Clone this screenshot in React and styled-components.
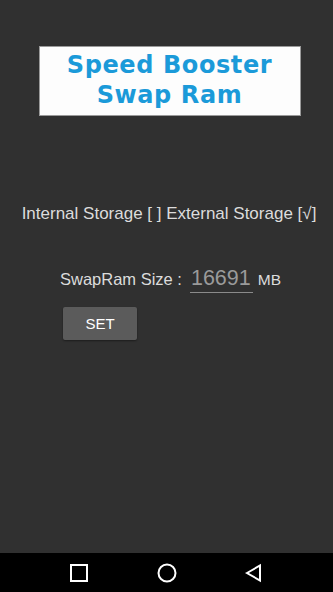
import React from 'react'
import styled, { createGlobalStyle } from 'styled-components'

const Global = createGlobalStyle`
  html, body { margin: 0; padding: 0; background: #303030; }
  body { font-family: "Liberation Sans", Arial, sans-serif; }
  #root { height: 592px; }
`

const Screen = styled.div`
  width: 333px;
  height: 592px;
  display: flex;
  flex-direction: column;
  background: #303030;
  color: #dcdcdc;
`

const Content = styled.div`
  flex: 1;
  display: flex;
  flex-direction: column;
  align-items: center;
  padding-top: 46px;
`

const Banner = styled.div`
  width: 262px;
  height: 70px;
  margin-left: 6px;
  background: #fdfdfd;
  border: 1px solid #9a9a9a;
  display: flex;
  flex-direction: column;
  align-items: center;
  justify-content: center;
  color: #1b9ad9;
  font-family: "DejaVu Sans", "Liberation Sans", sans-serif;
  font-weight: bold;
  font-size: 24px;
  line-height: 30px;
  letter-spacing: 0.6px;
  padding-bottom: 2px;
  box-sizing: border-box;
`

const Storage = styled.div`
  margin-top: 88px;
  font-size: 17px;
  white-space: nowrap;
  margin-left: 5px;
`

const SizeRow = styled.div`
  margin-top: 42px;
  display: flex;
  align-items: baseline;
  font-size: 16.5px;
  margin-left: 8px;
`

const SizeValue = styled.span`
  display: inline-block;
  margin: 0 5px 0 8px;
  padding: 0 2px 1px 1px;
  border-bottom: 1px solid #8a8a8a;
  color: #9a9a9a;
  font-size: 21.5px;
`

const Unit = styled.span`
  font-size: 15.5px;
`

const SetRow = styled.div`
  align-self: flex-start;
  margin: 14px 0 0 63px;
`

const SetButton = styled.button`
  width: 74px;
  height: 33px;
  border: none;
  border-radius: 2px;
  background: #5b5b5b;
  color: #fff;
  font-family: inherit;
  font-size: 15px;
  box-shadow: 0 1px 2px rgba(0,0,0,0.4);
`

const NavBar = styled.div`
  height: 39px;
  background: #000;
  display: flex;
  align-items: center;
  justify-content: space-between;
  padding: 0 69px 0 69px;
`

const NavIcon = styled.svg`
  width: 20px;
  height: 20px;
  stroke: #fff;
  stroke-width: 2;
  fill: none;
`

export default function App() {
  return (
    <Screen>
      <Global />
      <Content>
        <Banner>
          <div>Speed Booster</div>
          <div>Swap Ram</div>
        </Banner>
        <Storage>Internal Storage [ ] External Storage [√]</Storage>
        <SizeRow>
          SwapRam Size :<SizeValue>16691</SizeValue><Unit>MB</Unit>
        </SizeRow>
        <SetRow>
          <SetButton>SET</SetButton>
        </SetRow>
      </Content>
      <NavBar>
        <NavIcon viewBox="0 0 20 20"><rect x="2" y="2" width="16" height="16" /></NavIcon>
        <NavIcon viewBox="0 0 20 20"><circle cx="10" cy="10" r="8.5" /></NavIcon>
        <NavIcon viewBox="0 0 20 20"><path d="M3 10 L16 2.5 L16 17.5 Z" strokeLinejoin="miter" /></NavIcon>
      </NavBar>
    </Screen>
  )
}
